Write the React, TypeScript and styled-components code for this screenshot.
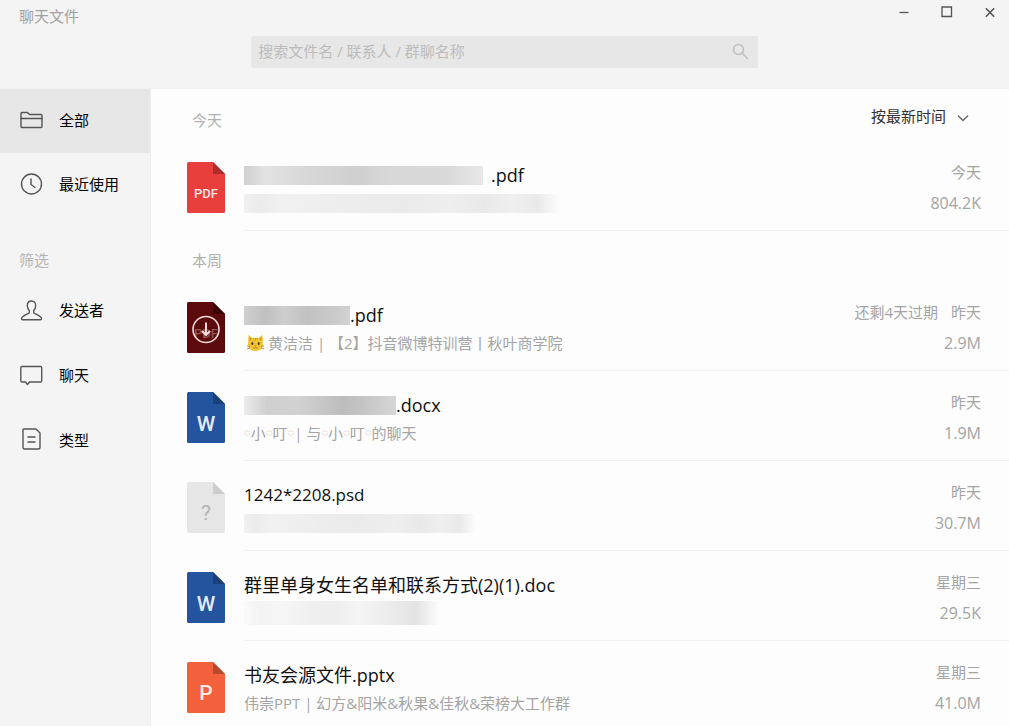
import React, { useState } from 'react';
import styled, { createGlobalStyle, css } from 'styled-components';

const GlobalStyle = createGlobalStyle`
  *, *::before, *::after { box-sizing: border-box; }
  body {
    margin: 0;
    background: #f4f4f4;
    color: #111;
    font-family: "Open Sans", "Noto Sans CJK SC", sans-serif;
    font-size: 15px;
    line-height: 20px;
  }
  button, input, select { font: inherit; color: inherit; }
`;

const Window = styled.div`
  display: flex;
  flex-direction: column;
  height: 100vh;
  overflow: hidden;
`;

const Header = styled.header`
  flex: none;
  padding-bottom: 20px;
  border-bottom: 1px solid #efefef;
`;

const TitleBar = styled.div`
  display: flex;
  justify-content: space-between;
  height: 36px;
`;

const WindowTitle = styled.h1`
  margin: 6px 0 0 19px;
  font-size: 15px;
  font-weight: 400;
  line-height: 20px;
  color: #a2a2a2;
`;

const WindowControls = styled.div`
  display: flex;
  gap: 5px;
`;

const ControlButton = styled.button`
  display: flex;
  align-items: center;
  justify-content: center;
  width: 38px;
  height: 24px;
  padding: 0;
  border: 0;
  background: none;
  color: #555;
`;

const SearchBox = styled.label`
  display: flex;
  align-items: center;
  width: calc(50% + 2px);
  height: 32px;
  margin: 0 auto;
  padding: 0 9px 2px 7px;
  border-radius: 2px;
  background: #e7e7e7;
  color: #c0c0c0;
`;

const SearchInput = styled.input`
  flex: 1;
  min-width: 0;
  height: 30px;
  padding: 0;
  border: 0;
  outline: 0;
  background: none;
  color: #333;
  &::placeholder { color: #bcbcbc; opacity: 1; }
`;

const Content = styled.div`
  display: flex;
  flex: 1;
  min-height: 0;
`;

const Sidebar = styled.nav`
  flex: none;
  width: 151px;
  border-right: 1px solid #ededed;
`;

const NavItem = styled.button<{ $active?: boolean; $filter?: boolean }>`
  display: flex;
  align-items: center;
  gap: 16px;
  width: 100%;
  height: ${p => (p.$filter ? 65 : 64)}px;
  padding: 0 0 2px 19px;
  border: 0;
  background: ${p => (p.$active ? '#e7e7e7' : 'transparent')};
  text-align: left;
  color: #000;
  svg { color: #555; }
`;

const NavLabel = styled.h2`
  margin: 33px 0 8px;
  padding-left: 19px;
  font-size: 15px;
  font-weight: 400;
  line-height: 20px;
  color: #b4b4b4;
`;

const Main = styled.main`
  flex: 1;
  min-width: 0;
  padding-top: 2px;
  background: #fdfdfd;
  overflow: hidden;
`;

const SectionHead = styled.div`
  display: flex;
  justify-content: space-between;
  height: 50px;
  padding: 19px 40px 0 41px;
`;

const SectionTitle = styled.h2`
  margin: 0;
  font-size: 15px;
  font-weight: 400;
  line-height: 20px;
  color: #b0b0b0;
`;

const SortField = styled.label`
  position: relative;
  height: 20px;
  margin-top: -4px;
  color: #333;
  svg {
    position: absolute;
    right: 0;
    top: 8px;
    color: #666;
    pointer-events: none;
  }
`;

const SortSelect = styled.select`
  appearance: none;
  height: 20px;
  padding: 0 22px 0 0;
  border: 0;
  background: none;
  line-height: 20px;
`;

const FileList = styled.ul`
  margin: 0;
  padding: 0;
  list-style: none;
`;

const FileRow = styled.li`
  display: flex;
  height: 90px;
  padding-left: 36px;
  & > svg { flex: none; margin-top: 21px; }
`;

const RowBody = styled.div`
  display: flex;
  flex: 1;
  justify-content: space-between;
  min-width: 0;
  margin-left: 19px;
  padding-right: 28px;
  border-bottom: 1px solid #f0f0f0;
`;

const FileText = styled.div`
  padding-top: 22px;
  white-space: nowrap;
`;

const FileName = styled.div<{ $numeric?: boolean }>`
  display: flex;
  align-items: center;
  height: 24px;
  font-size: ${p => (p.$numeric ? 17 : 18)}px;
  line-height: 24px;
  color: #111;
`;

const FileSource = styled.div`
  display: flex;
  align-items: center;
  height: 20px;
  margin-top: 6px;
  white-space: pre;
  color: #a4a4a4;
`;

const FileMeta = styled.div`
  display: flex;
  flex-direction: column;
  align-items: flex-end;
  gap: 11px;
  padding-top: 21px;
  white-space: nowrap;
  color: #a4a4a4;
`;

const MetaLine = styled.div`
  display: flex;
  gap: 13px;
  height: 20px;
`;

const FileSize = styled.span`
  font-size: 16px;
  line-height: 20px;
`;

const Sparkle = styled.span`
  font-size: 7px;
  line-height: 20px;
`;

const maskTones = {
  dark: css`background: linear-gradient(90deg, #cfcfcf, #c0c0c0 20%, #cdcdcd 38%, #c2c2c2 60%, #cacaca 85%, #d2d2d2);`,
  mid: css`background: linear-gradient(90deg, #ececec, #cfcfcf 15%, #d2d2d2 35%, #bdbdbd 65%, #c6c6c6 80%, #d6d6d6);`,
  pale: css`background: linear-gradient(90deg, #d0d0d0, #e2e2e2 9%, #d8d8d8 25%, #cfcfcf 48%, #d8d8d8 60%, #d9d9d9 85%, #e8e8e8);`,
  faint: css`background: linear-gradient(90deg, #f0f0f0, #ebebeb 5%, #f1f1f1 12%, #ededed 32%, #eaeaea 50%, #eeeeee 65%, #e9e9e9 76%, #efefef 85%, #e9e9e9 93%, #fdfdfd);`,
  airy: css`background: linear-gradient(90deg, #fafafa, #f3f3f3 8%, #f6f6f6 20%, #efefef 35%, #eeeeee 48%, #f5f5f5 58%, #ededed 72%, #e3e3e3 88%, #fdfdfd);`,
};

const Mask = styled.span<{ $tone: keyof typeof maskTones; $width: number; $gap?: number }>`
  display: block;
  width: ${p => p.$width}px;
  height: ${p => (p.$tone === 'airy' ? 24 : 19)}px;
  margin-right: ${p => p.$gap || 0}px;
  ${p => maskTones[p.$tone]}
`;

type Kind = 'pdf' | 'pending' | 'word' | 'unknown' | 'ppt';

const looks: Record<Kind, { body: string; fold: string; ink: string; letter: string; size: number; y: number }> = {
  pdf: { body: '#e83e3c', fold: '#b02c2c', ink: '#fbe3e2', letter: 'PDF', size: 13, y: 36 },
  pending: { body: '#5c0a0b', fold: '#3a0405', ink: '#8d5556', letter: 'PDF', size: 13, y: 36 },
  word: { body: '#24549d', fold: '#1b3f78', ink: '#e4ebf7', letter: 'W', size: 21, y: 39 },
  unknown: { body: '#e6e6e6', fold: '#cdcdcd', ink: '#b4b4b4', letter: '?', size: 21, y: 38 },
  ppt: { body: '#f2613c', fold: '#b8492e', ink: '#fdeae4', letter: 'P', size: 21, y: 38 },
};

function FileIcon({ kind }: { kind: Kind }) {
  const k = looks[kind];
  return (
    <svg width="38" height="51" viewBox="0 0 38 51" aria-hidden="true">
      <path d="M1.5 0H26L38 12V49.5Q38 51 36.5 51H1.5Q0 51 0 49.5V1.5Q0 0 1.5 0Z" fill={k.body} />
      <path d="M26 0L38 12H26Z" fill={k.fold} />
      <text
        x="19"
        y={k.y}
        textAnchor="middle"
        fontFamily="Roboto, sans-serif"
        fontSize={k.size}
        fontWeight={kind === 'unknown' ? 400 : 500}
        fill={k.ink}
      >
        {k.letter}
      </text>
      {kind === 'pending' && (
        <g fill="none" stroke="#f0dcdc" strokeWidth="1.6">
          <circle cx="19" cy="27.5" r="13" />
          <path d="M19 20.5V33" strokeWidth="2" />
          <path d="M15 29L19 33L23 29" strokeWidth="2" />
        </g>
      )}
    </svg>
  );
}

const line = { fill: 'none', stroke: 'currentColor', strokeWidth: 1.4, strokeLinejoin: 'round' as const, strokeLinecap: 'round' as const };

const FolderIcon = () => (
  <svg width="24" height="24" viewBox="0 0 24 24" {...line}>
    <path d="M2 18V5.500Q2 4.500 3 4.500H8.500L10.500 6.500H22Q23 6.500 23 7.500V18.500Q23 19.500 22 19.500H3Q2 19.500 2 18.500Z" />
    <path d="M2 10.500H23" />
  </svg>
);

const ClockIcon = () => (
  <svg width="24" height="24" viewBox="0 0 24 24" {...line}>
    <circle cx="12.500" cy="12" r="10" />
    <path d="M12 7V12.500L16 15.500" />
  </svg>
);

const PersonIcon = () => (
  <svg width="24" height="24" viewBox="0 0 24 24" {...line}>
    <path d="M12.500 3C9.800 3 8.300 5 8.300 7.500C8.300 9.500 9.100 11.300 10.300 12.400V14.700C10.300 15.500 3.800 17.300 2.700 19.800C2.200 21 2.700 21.700 3.700 21.700H21.300C22.300 21.700 22.800 21 22.300 19.800C21.200 17.300 14.700 15.500 14.700 14.700V12.400C15.900 11.300 16.700 9.500 16.700 7.500C16.700 5 15.200 3 12.500 3Z" />
  </svg>
);

const ChatIcon = () => (
  <svg width="24" height="24" viewBox="0 0 24 24" {...line}>
    <path d="M3 3.500H21.500Q22.700 3.500 22.700 4.700V17.800Q22.700 19 21.500 19H10.500L8.500 21.500L6.500 19H3Q1.800 19 1.800 17.800V4.700Q1.800 3.500 3 3.500Z" />
  </svg>
);

const DocIcon = () => (
  <svg width="24" height="24" viewBox="0 0 24 24" {...line}>
    <path d="M5 1H17L21 5V19.500Q21 21 19.500 21H5.500Q4 21 4 19.500V2Q4 1 5 1Z" />
    <path d="M9 9H16M9 14H16" />
  </svg>
);

interface FileEntry {
  id: string;
  kind: Kind;
  name: React.ReactNode;
  source: React.ReactNode;
  date: string;
  size: string;
  expiry?: string;
  numeric?: boolean;
}

const Dots = () => <Sparkle>҉</Sparkle>;

const today: FileEntry[] = [
  {
    id: 'a', kind: 'pdf', date: '今天', size: '804.2K',
    name: <><Mask $tone="pale" $width={239} $gap={8} />.pdf</>,
    source: <Mask $tone="faint" $width={316} />,
  },
];

const thisWeek: FileEntry[] = [
  {
    id: 'b', kind: 'pending', date: '昨天', size: '2.9M', expiry: '还剩4天过期',
    name: <><Mask $tone="dark" $width={106} />.pdf</>,
    source: <><CatFace />黄洁洁 | 【2】抖音微博特训营丨秋叶商学院</>,
  },
  {
    id: 'c', kind: 'word', date: '昨天', size: '1.9M',
    name: <><Mask $tone="mid" $width={152} />.docx</>,
    source: (
      <>
        <Dots />小<Dots />叮<Dots />{'| 与'}<Dots />小<Dots />叮<Dots />的聊天
      </>
    ),
  },
  {
    id: 'd', kind: 'unknown', date: '昨天', size: '30.7M', numeric: true,
    name: '1242*2208.psd',
    source: <Mask $tone="faint" $width={232} />,
  },
  {
    id: 'e', kind: 'word', date: '星期三', size: '29.5K',
    name: '群里单身女生名单和联系方式(2)(1).doc',
    source: <Mask $tone="airy" $width={196} />,
  },
  {
    id: 'f', kind: 'ppt', date: '星期三', size: '41.0M',
    name: '书友会源文件.pptx',
    source: '伟崇PPT | 幻方&阳米&秋果&佳秋&荣榜大工作群',
  },
];

const CatSvg = styled.svg`
  flex: none;
  margin: 0 4px 0 3px;
`;

function CatFace() {
  return (
    <CatSvg width="17" height="18" viewBox="0 0 17 18" aria-label="猫">
      <path d="M1.500 1L5.500 4H11.500L15.500 1L16 11Q14.500 17 8.500 17T1 11Z" fill="#f3c433" />
      <path d="M2.500 3L4.500 5L2.500 7ZM14.500 3L12.500 5L14.500 7Z" fill="#c98a2a" />
      <path d="M8.500 4V6.500M6.500 4V5.500M10.500 4V5.500" stroke="#c08a2a" strokeWidth="0.800" />
      <ellipse cx="5.300" cy="9.500" rx="1" ry="1.500" fill="#4a3a18" />
      <ellipse cx="11.700" cy="9.500" rx="1" ry="1.500" fill="#4a3a18" />
      <path d="M7.500 11.500H9.500L8.500 12.500Z" fill="#d0603a" />
      <path d="M6 14Q7.500 14.500 8.500 13Q9.500 14.500 11 14M0 12L3 12.300M0 15L3 13.800M17 12L14 12.300M17 15L14 13.800" stroke="#8a6a2a" strokeWidth="0.700" fill="none" />
    </CatSvg>
  );
}

function Files({ items }: { items: FileEntry[] }) {
  return (
    <FileList>
      {items.map(f => (
        <FileRow key={f.id}>
          <FileIcon kind={f.kind} />
          <RowBody>
            <FileText>
              <FileName $numeric={f.numeric}>{f.name}</FileName>
              <FileSource>{f.source}</FileSource>
            </FileText>
            <FileMeta>
              <MetaLine>
                {f.expiry && <span>{f.expiry}</span>}
                <span>{f.date}</span>
              </MetaLine>
              <FileSize>{f.size}</FileSize>
            </FileMeta>
          </RowBody>
        </FileRow>
      ))}
    </FileList>
  );
}

export default function App() {
  const [query, setQuery] = useState('');
  return (
    <>
      <GlobalStyle />
      <Window>
        <Header>
          <TitleBar>
            <WindowTitle>聊天文件</WindowTitle>
            <WindowControls>
              <ControlButton aria-label="最小化">
                <svg width="12" height="12" viewBox="0 0 12 12"><path d="M1.500 6.500H10.500" stroke="currentColor" strokeWidth="1.300" /></svg>
              </ControlButton>
              <ControlButton aria-label="最大化">
                <svg width="12" height="12" viewBox="0 0 12 12"><path d="M1 1H10.500V10.500H1Z" fill="none" stroke="currentColor" strokeWidth="1.300" /></svg>
              </ControlButton>
              <ControlButton aria-label="关闭">
                <svg width="12" height="12" viewBox="0 0 12 12"><path d="M1.800 2.300L10.200 10.700M10.200 2.300L1.800 10.700" stroke="currentColor" strokeWidth="1.600" /></svg>
              </ControlButton>
            </WindowControls>
          </TitleBar>
          <SearchBox>
            <SearchInput
              value={query}
              onChange={e => setQuery(e.target.value)}
              placeholder="搜索文件名 / 联系人 / 群聊名称"
              aria-label="搜索"
            />
            <svg width="17" height="17" viewBox="0 0 17 17" fill="none" stroke="currentColor" strokeWidth="1.600">
              <circle cx="6.500" cy="6.500" r="5" />
              <path d="M10.200 10.200L15.800 15.800" />
            </svg>
          </SearchBox>
        </Header>
        <Content>
          <Sidebar>
            <NavItem $active><FolderIcon />全部</NavItem>
            <NavItem><ClockIcon />最近使用</NavItem>
            <NavLabel>筛选</NavLabel>
            <NavItem $filter><PersonIcon />发送者</NavItem>
            <NavItem $filter><ChatIcon />聊天</NavItem>
            <NavItem $filter><DocIcon />类型</NavItem>
          </Sidebar>
          <Main>
            <SectionHead>
              <SectionTitle>今天</SectionTitle>
              <SortField>
                <SortSelect aria-label="排序">
                  <option>按最新时间</option>
                </SortSelect>
                <svg width="12" height="8" viewBox="0 0 12 8" fill="none" stroke="currentColor" strokeWidth="1.400">
                  <path d="M1 1.500L6 6.500L11 1.500" />
                </svg>
              </SortField>
            </SectionHead>
            <Files items={today} />
            <SectionHead>
              <SectionTitle>本周</SectionTitle>
            </SectionHead>
            <Files items={thisWeek} />
          </Main>
        </Content>
      </Window>
    </>
  );
}
